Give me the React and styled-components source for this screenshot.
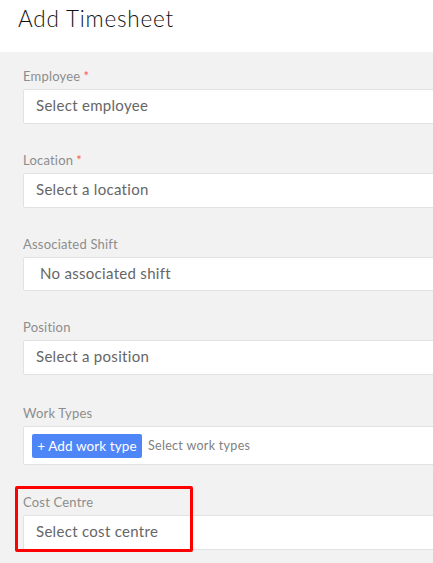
import React from "react";
import styled, { createGlobalStyle } from "styled-components";

const Global = createGlobalStyle`
  html, body { margin: 0; padding: 0; }
  body {
    background: #f2f2f2;
    font-family: "Lato", "Open Sans", sans-serif;
    overflow: hidden;
  }
`;

const Page = styled.div`
  width: 433px;
  height: 563px;
  overflow: hidden;
  background: #f2f2f2;
`;

const Header = styled.header`
  height: 52px;
  background: #ffffff;
  display: flex;
  align-items: flex-start;
  padding-left: 18px;
  box-sizing: border-box;
  padding-top: 6px;
`;

const Title = styled.h1`
  margin: 0;
  font-size: 22.5px;
  line-height: 26px;
  font-weight: 300;
  color: #111111;
  letter-spacing: 0.8px;
`;

const Form = styled.div`
  padding: 15px 0 0 23px;
  display: flex;
  flex-direction: column;
  gap: 27px;
`;

const Field = styled.div`
  position: relative;
  display: flex;
  flex-direction: column;
  margin-top: ${(p) => p.$mt || 0}px;
`;

const Label = styled.label`
  font-size: 13px;
  line-height: 18px;
  color: #8d8d8d;
  margin-bottom: 4px;
  letter-spacing: 0.2px;
`;

const Req = styled.span`
  color: #f25c5c;
  margin-left: 3px;
`;

const Box = styled.div`
  width: 440px;
  height: ${(p) => p.$h || 35}px;
  box-sizing: border-box;
  background: #fff;
  border: 1px solid #e2e2e2;
  border-radius: 2px;
  display: flex;
  align-items: center;
  padding-left: ${(p) => p.$pad || 12}px;
  padding-bottom: ${(p) => p.$pb ?? 3}px;
  gap: 6px;
  font-size: 15px;
  color: #666666;
  letter-spacing: 0.3px;
`;

const AddButton = styled.button`
  border: none;
  background: #4f86f7;
  color: #fff;
  border-radius: 2px;
  height: 24px;
  width: 110px;
  padding: 0;
  font-family: inherit;
  font-size: 13.5px;
  letter-spacing: 0.1px;
`;

const Hint = styled.span`
  font-size: 12.5px;
  color: #808080;
`;

const Highlight = styled.div`
  position: absolute;
  left: -8px;
  top: -7px;
  width: 178px;
  height: 66px;
  box-sizing: border-box;
  border: 3px solid #ff0000;
  border-radius: 2px;
  pointer-events: none;
`;

export default function App() {
  return (
    <Page>
      <Global />
      <Header>
        <Title>Add Timesheet</Title>
      </Header>
      <Form>
        <Field>
          <Label>Employee<Req>*</Req></Label>
          <Box>Select employee</Box>
        </Field>
        <Field>
          <Label>Location<Req>*</Req></Label>
          <Box>Select a location</Box>
        </Field>
        <Field>
          <Label>Associated Shift</Label>
          <Box $pad={16} $h={34}>No associated shift</Box>
        </Field>
        <Field>
          <Label>Position</Label>
          <Box>Select a position</Box>
        </Field>
        <Field $mt={2}>
          <Label>Work Types</Label>
          <Box $h={39} $pad={8} $pb={0}>
            <AddButton>+ Add work type</AddButton>
            <Hint>Select work types</Hint>
          </Box>
        </Field>
        <Field $mt={1}>
          <Highlight />
          <Label>Cost Centre</Label>
          <Box>Select cost centre</Box>
        </Field>
      </Form>
    </Page>
  );
}
